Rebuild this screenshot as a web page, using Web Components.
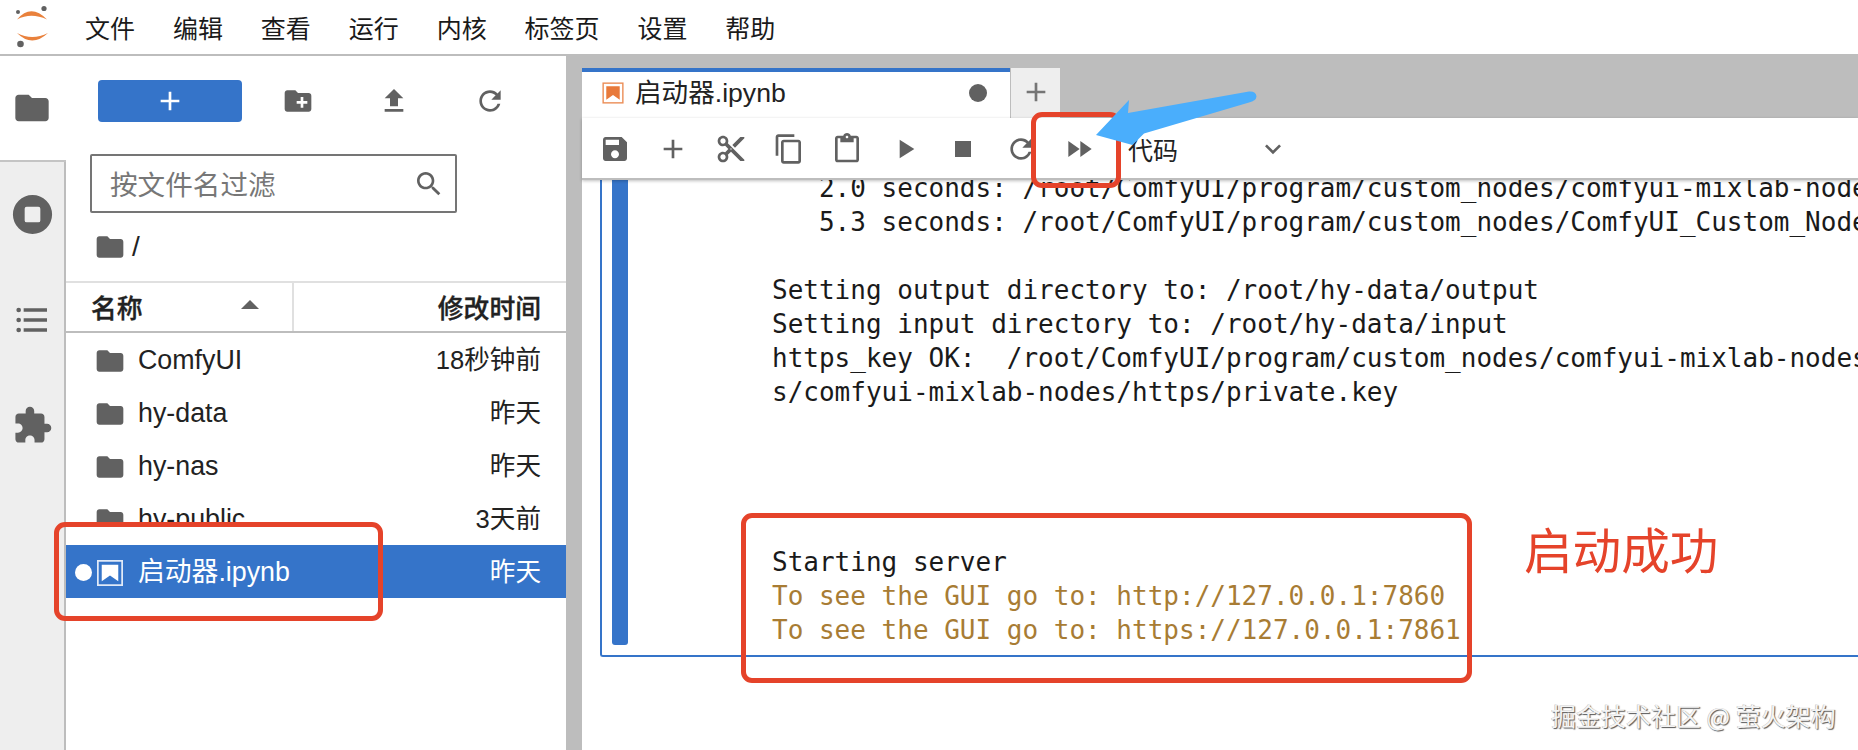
<!DOCTYPE html>
<html lang="zh">
<head>
<meta charset="utf-8">
<title>JupyterLab</title>
<style>
html,body{margin:0;padding:0;background:#fff;overflow:hidden}
body{font-family:"Liberation Sans","Noto Sans CJK SC",sans-serif;color:#1c1c1c}
</style>
</head>
<body>
<jl-app></jl-app>
<script>
const ICONS={
folder:'<path d="M10 4H4c-1.1 0-2 .9-2 2v12c0 1.1.9 2 2 2h16c1.1 0 2-.9 2-2V8c0-1.1-.9-2-2-2h-8l-2-2z"/>',
newfolder:'<path d="M20 6h-8l-2-2H4c-1.11 0-1.99.89-1.99 2L2 18c0 1.11.89 2 2 2h16c1.11 0 2-.89 2-2V8c0-1.11-.89-2-2-2zm-1 8h-3v3h-2v-3h-3v-2h3V9h2v3h3v2z"/>',
upload:'<path d="M5 20h14v-2H5v2zm0-10h4v6h6v-6h4l-7-7-7 7z"/>',
refresh:'<path d="M17.65 6.35C16.2 4.9 14.21 4 12 4c-4.42 0-7.99 3.58-7.99 8s3.57 8 7.99 8c3.73 0 6.84-2.55 7.73-6h-2.08c-.82 2.33-3.04 4-5.65 4-3.31 0-6-2.69-6-6s2.69-6 6-6c1.66 0 3.14.69 4.22 1.78L13 11h7V4l-2.35 2.35z"/>',
search:'<path d="M15.5 14h-.79l-.28-.27C15.41 12.59 16 11.11 16 9.5 16 5.91 13.09 3 9.5 3S3 5.91 3 9.5 5.91 16 9.5 16c1.61 0 3.09-.59 4.23-1.57l.27.28v.79l5 4.99L20.49 19l-4.99-5zm-6 0C7.01 14 5 11.99 5 9.5S7.01 5 9.5 5 14 7.01 14 9.5 11.99 14 9.5 14z"/>',
save:'<path d="M17 3H5c-1.11 0-2 .9-2 2v14c0 1.1.89 2 2 2h14c1.1 0 2-.9 2-2V7l-4-4zm-5 16c-1.66 0-3-1.34-3-3s1.34-3 3-3 3 1.34 3 3-1.34 3-3 3zm3-10H5V5h10v4z"/>',
add:'<path d="M19 13h-6v6h-2v-6H5v-2h6V5h2v6h6v2z"/>',
cut:'<path d="M9.64 7.64c.23-.5.36-1.05.36-1.64 0-2.21-1.79-4-4-4S2 3.79 2 6s1.79 4 4 4c.59 0 1.14-.13 1.64-.36L10 12l-2.36 2.36C7.14 14.13 6.59 14 6 14c-2.21 0-4 1.79-4 4s1.79 4 4 4 4-1.79 4-4c0-.59-.13-1.14-.36-1.64L12 14l7 7h3v-1L9.64 7.64zM6 8c-1.1 0-2-.89-2-2s.9-2 2-2 2 .89 2 2-.9 2-2 2zm0 12c-1.1 0-2-.89-2-2s.9-2 2-2 2 .89 2 2-.9 2-2 2zm6-7.5c-.28 0-.5-.22-.5-.5s.22-.5.5-.5.5.22.5.5-.22.5-.5.5zM19 3l-6 6 2 2 7-7V3z"/>',
copy:'<path d="M16 1H4c-1.1 0-2 .9-2 2v14h2V3h12V1zm3 4H8c-1.1 0-2 .9-2 2v14c0 1.1.9 2 2 2h11c1.1 0 2-.9 2-2V7c0-1.1-.9-2-2-2zm0 16H8V7h11v14z"/>',
paste:'<path d="M19 2h-4.18C14.4.84 13.3 0 12 0c-1.3 0-2.4.84-2.82 2H5c-1.1 0-2 .9-2 2v16c0 1.1.9 2 2 2h14c1.1 0 2-.9 2-2V4c0-1.1-.9-2-2-2zm-7 0c.55 0 1 .45 1 1s-.45 1-1 1-1-.45-1-1 .45-1 1-1zm7 18H5V4h2v3h10V4h2v16z"/>',
play:'<path d="M8 5v14l11-7z"/>',
stop:'<path d="M6 6h12v12H6z"/>',
ff:'<path d="M4 18l8.5-6L4 6v12zm9-12v12l8.5-6L13 6z"/>',
chevron:'<path d="M7.41 8.59L12 13.17l4.59-4.58L18 10l-6 6-6-6z"/>',
stopcircle:'<path fill-rule="evenodd" d="M12 2a10 10 0 1 0 0 20 10 10 0 0 0 0-20zM9 8h6a1 1 0 0 1 1 1v6a1 1 0 0 1-1 1H9a1 1 0 0 1-1-1V9a1 1 0 0 1 1-1z"/>',
list:'<path d="M7 5h14v2H7zM7 11h14v2H7zM7 17h14v2H7z"/><circle cx="4" cy="6" r="1.4"/><circle cx="4" cy="12" r="1.4"/><circle cx="4" cy="18" r="1.4"/>',
puzzle:'<path d="M20.5 11H19V7c0-1.1-.9-2-2-2h-4V3.5C13 2.12 11.88 1 10.5 1S8 2.12 8 3.5V5H4c-1.1 0-1.99.9-1.99 2v3.8H3.5c1.49 0 2.7 1.21 2.7 2.7s-1.21 2.7-2.7 2.7H2V20c0 1.1.9 2 2 2h3.8v-1.5c0-1.49 1.21-2.7 2.7-2.7 1.49 0 2.7 1.21 2.7 2.7V22H17c1.1 0 2-.9 2-2v-4h1.5c1.38 0 2.5-1.12 2.5-2.5S21.88 11 20.5 11z"/>',
notebook:'<rect x="2.9" y="2.9" width="18.2" height="18.2" fill="none" stroke="currentColor" stroke-width="1.3" opacity=".85"/><path d="M5.8 5.8h12.4v12.4l-6.2-4.4-6.2 4.4z"/>'
};
class JlIcon extends HTMLElement{
  connectedCallback(){
    if(this.shadowRoot)return;
    const s=this.getAttribute('size')||32;
    this.attachShadow({mode:'open'}).innerHTML=`<style>:host{display:inline-flex;flex:none;width:${s}px;height:${s}px;color:var(--icon,#616161)}svg{display:block;width:100%;height:100%;fill:currentColor}</style><svg viewBox="0 0 24 24">${ICONS[this.getAttribute('name')]||''}</svg>`;
  }
}
customElements.define('jl-icon',JlIcon);

class JlMenubar extends HTMLElement{
  constructor(){super();this.attachShadow({mode:'open'}).innerHTML=`<style>
:host{display:flex;align-items:center;height:54px;border-bottom:2px solid #bdbdbd;background:#fff;box-sizing:content-box}
svg{display:block;width:66px;height:54px;flex:none}
nav{display:flex;gap:37.9px;margin-left:19px;font:25px/54px "Noto Sans CJK SC",sans-serif;color:#1a1a1a}
</style>
<svg viewBox="0 0 66 54"><path d="M17 19.5Q31 3 47 19.5Q31 12 17 19.5z" fill="#e9813c"/><path d="M17 33Q32 48 48 33Q32 41 17 33z" fill="#e9813c"/><circle cx="44" cy="8.5" r="2.6" fill="#616161"/><circle cx="18" cy="12" r="2" fill="#616161"/><circle cx="20.500" cy="44" r="3.300" fill="#616161"/></svg>
<nav><span>文件</span><span>编辑</span><span>查看</span><span>运行</span><span>内核</span><span>标签页</span><span>设置</span><span>帮助</span></nav>`}
}
customElements.define('jl-menubar',JlMenubar);

class JlSidebar extends HTMLElement{
  constructor(){super();this.attachShadow({mode:'open'}).innerHTML=`<style>
:host{display:flex;flex-direction:column;width:66px;flex:none;box-sizing:border-box;background:#eee;position:relative}
.tab{height:105.6px;display:flex;align-items:center;justify-content:center;box-sizing:border-box;border-right:2px solid #bdbdbd}
.tab.on{background:#fff;border-right:none;border-bottom:2px solid #c4c4c4;padding-right:2px}
.fill{flex:1;border-right:2px solid #bdbdbd}
</style>
<div class="tab on"><jl-icon name="folder" size="40"></jl-icon></div>
<div class="tab"><jl-icon name="stopcircle" size="47"></jl-icon></div>
<div class="tab"><jl-icon name="list" size="40"></jl-icon></div>
<div class="tab"><jl-icon name="puzzle" size="41"></jl-icon></div>
<div class="fill"></div>`}
}
customElements.define('jl-sidebar',JlSidebar);

class JlFileRow extends HTMLElement{
  constructor(){super();
    const sel=this.hasAttribute('selected');
    this.attachShadow({mode:'open'}).innerHTML=`<style>
:host{display:flex;align-items:center;height:53px;padding:2px 25px 0 0;font:26.8px/51px "Liberation Sans","Noto Sans CJK SC",sans-serif;color:#222;box-sizing:border-box;--icon:#616161}
:host([selected]){background:#3574c9;color:#fff;--icon:#fff}
.dot{width:28px;flex:none;display:flex;justify-content:flex-start}
.dot i{display:block;width:17px;height:17px;border-radius:50%;background:#fff;margin-left:9px}
.name{margin-left:12px;flex:1}
.date{font-size:25.6px}
</style>
<span class="dot">${sel?'<i></i>':''}</span>
<jl-icon name="${this.getAttribute('icon')||'folder'}" size="32"></jl-icon>
<span class="name">${this.getAttribute('name')}</span>
<span class="date">${this.getAttribute('date')}</span>`}
}
customElements.define('jl-file-row',JlFileRow);

class JlFilebrowser extends HTMLElement{
  constructor(){super();this.attachShadow({mode:'open'}).innerHTML=`<style>
:host{display:flex;flex-direction:column;width:500px;flex:none;background:#fff;position:relative}
.bar{display:flex;align-items:center;height:42px;margin:24px 0 0 32px}
button{width:144px;height:42px;border:0;border-radius:4px;background:#3574c9;padding:0;display:flex;align-items:center;justify-content:center;--icon:#fff}
.cell{width:96px;display:flex;justify-content:center}
.cell.first{margin-left:8px}
.filter{margin:32px 0 0 24px;width:367px;height:59px;box-sizing:border-box;border:2px solid #757575;border-radius:2px;display:flex;align-items:center;padding:0 10px 0 18px;color:#777;font:27.6px/55px "Noto Sans CJK SC",sans-serif}
.filter span{flex:1}
.crumb{display:flex;align-items:center;height:68px;padding-left:28px;font:28px/68px "Liberation Sans",sans-serif;color:#222}
.crumb span{margin-left:6px}
.head{display:flex;height:52px;box-sizing:border-box;border-top:2px solid #e0e0e0;border-bottom:2px solid #bdbdbd;font:500 25.8px/48px "Noto Sans CJK SC",sans-serif;color:#222;-webkit-text-stroke:.35px #222}
.c1{width:228px;box-sizing:border-box;padding-left:25px;border-right:2px solid #e0e0e0;display:flex;justify-content:space-between;align-items:center;padding-right:33px}
.c1 svg{display:block;width:18px;height:9px;fill:#616161;margin-top:-6px}
.c2{flex:1;text-align:right;padding-right:25px}
.patch{position:absolute;left:0;width:312px;top:471px;height:18px;background:#fff}
</style>
<div class="bar"><button aria-label="新建"><jl-icon name="add" size="32"></jl-icon></button>
<div class="cell first"><jl-icon name="newfolder"></jl-icon></div><div class="cell"><jl-icon name="upload"></jl-icon></div><div class="cell"><jl-icon name="refresh"></jl-icon></div></div>
<div class="filter"><span>按文件名过滤</span><jl-icon name="search" size="32" style="--icon:#616161"></jl-icon></div>
<div class="crumb"><jl-icon name="folder" size="32"></jl-icon><span>/</span></div>
<div class="head"><div class="c1"><span>名称</span><svg viewBox="0 0 18 9"><path d="M9 0l9 9H0z"/></svg></div><div class="c2">修改时间</div></div>
<jl-file-row name="ComfyUI" date="18秒钟前"></jl-file-row>
<jl-file-row name="hy-data" date="昨天"></jl-file-row>
<jl-file-row name="hy-nas" date="昨天"></jl-file-row>
<jl-file-row name="hy-public" date="3天前"></jl-file-row>
<jl-file-row name="启动器.ipynb" date="昨天" icon="notebook" selected></jl-file-row>
<div class="patch"></div>`}
}
customElements.define('jl-filebrowser',JlFilebrowser);

class JlNotebook extends HTMLElement{
  constructor(){super();this.attachShadow({mode:'open'}).innerHTML=`<style>
:host{display:flex;flex-direction:column;flex:1;min-width:0;background:#bdbdbd;padding:12px 0 0 16px;box-sizing:border-box;height:694px;overflow:hidden}
.tabs{display:flex;height:50px;flex:none}
.tab{width:428px;background:#fff;border-top:4px solid #3574c9;box-sizing:border-box;display:flex;align-items:center;padding:0 23px 4px 18px;font:26.6px/46px "Liberation Sans","Noto Sans CJK SC",sans-serif;color:#222}
.tab b{font-weight:400;flex:1;margin-left:9px}
.tab i{display:block;width:18px;height:18px;border-radius:50%;background:#616161}
.plus{width:49px;margin-left:1px;background:#eee;display:flex;align-items:center;justify-content:center;padding-bottom:2px;box-sizing:border-box;--icon:#757575}
.tb{display:flex;align-items:center;height:62px;flex:none;box-sizing:border-box;background:#fff;padding:2px 0 0 4px;border-bottom:2px solid #bdbdbd;box-shadow:0 1px 3px rgba(0,0,0,.25);position:relative;z-index:1}
.tb .c{width:58px;display:flex;justify-content:center}
.tb .kind{margin-left:20px;width:129px;font:25px/58px "Noto Sans CJK SC",sans-serif;color:#222}
.body{flex:1;min-height:0;background:#fff;overflow:hidden;padding-left:18px}
.cell{margin-top:-40px;height:517px;box-sizing:border-box;border-left:2px solid #3574c9;border-bottom:2px solid #3574c9;border-bottom-left-radius:3px;padding-left:10px;display:flex}
.col{width:16px;flex:none;height:505px;background:#3574c9;border-radius:0 0 3px 3px}
.out{margin-left:144px;flex:none}
pre{margin:0;font:26px/34px "DejaVu Sans Mono",monospace;color:#1a1a1a;white-space:pre}
pre.top{margin-top:31px;width:1086px;overflow:hidden}
pre.bot{margin-top:136px;width:max-content}
.y{color:#a87c34}
</style>
<div class="tabs"><div class="tab"><jl-icon name="notebook" size="26" style="--icon:#e8793a"></jl-icon><b>启动器.ipynb</b><i></i></div><div class="plus"><jl-icon name="add" size="32"></jl-icon></div></div>
<div class="tb">
<div class="c"><jl-icon name="save"></jl-icon></div><div class="c"><jl-icon name="add"></jl-icon></div><div class="c"><jl-icon name="cut"></jl-icon></div><div class="c"><jl-icon name="copy"></jl-icon></div><div class="c"><jl-icon name="paste"></jl-icon></div><div class="c"><jl-icon name="play"></jl-icon></div><div class="c"><jl-icon name="stop"></jl-icon></div><div class="c"><jl-icon name="refresh"></jl-icon></div><div class="c"><jl-icon name="ff"></jl-icon></div>
<div class="kind">代码</div><jl-icon name="chevron"></jl-icon>
</div>
<div class="body"><div class="cell"><div class="col"></div><div class="out"><pre class="top">   2.0 seconds: /root/ComfyUI/program/custom_nodes/comfyui-mixlab-nodes
   5.3 seconds: /root/ComfyUI/program/custom_nodes/ComfyUI_Custom_Nodes

Setting output directory to: /root/hy-data/output
Setting input directory to: /root/hy-data/input
https_key OK:  /root/ComfyUI/program/custom_nodes/comfyui-mixlab-nodes
s/comfyui-mixlab-nodes/https/private.key</pre><pre class="bot">Starting server
<span class="y">To see the GUI go to: http://127.0.0.1:7860
To see the GUI go to: https://127.0.0.1:7861</span></pre></div></div></div>`}
}
customElements.define('jl-notebook',JlNotebook);

class JlRedBox extends HTMLElement{
  constructor(){super();this.attachShadow({mode:'open'}).innerHTML=`<style>:host{display:block;position:absolute;z-index:5;box-sizing:border-box;border:5px solid #e5432a;border-radius:11px;pointer-events:none}</style>`}
}
customElements.define('jl-red-box',JlRedBox);

class JlApp extends HTMLElement{
  constructor(){super();this.attachShadow({mode:'open'}).innerHTML=`<style>
:host{display:block;position:relative;width:1858px;height:750px;overflow:hidden}
.row{display:flex;height:694px}
.arrow{position:absolute;z-index:6;left:0;top:0;width:1858px;height:750px;pointer-events:none}
.note{position:absolute;left:1524px;top:519px;font:48.6px/58px "Noto Sans CJK SC",sans-serif;color:#e5432a}
.wm{position:absolute;left:1551px;top:698px;font:25px/34px "Noto Sans CJK SC",sans-serif;color:#f4f4f4;text-shadow:1px 1px 1px #555,-.5px -.5px 0 #bbb;white-space:pre}
</style>
<jl-menubar></jl-menubar>
<div class="row"><jl-sidebar></jl-sidebar><jl-filebrowser></jl-filebrowser><jl-notebook></jl-notebook></div>
<jl-red-box style="left:54px;top:522px;width:329px;height:99px"></jl-red-box>
<jl-red-box style="left:1031px;top:112px;width:90px;height:76px"></jl-red-box>
<jl-red-box style="left:741px;top:513px;width:731px;height:170px"></jl-red-box>
<svg class="arrow" viewBox="0 0 1858 750"><path d="M1096 135L1129 100L1128 113L1249 91.500Q1256 91 1256.500 96.500Q1256 101 1249 102.500L1144 133.500L1132.500 145z" fill="#4aaefc"/></svg>
<div class="note">启动成功</div>
<div class="wm">掘金技术社区 @ 萤火架构</div>`}
}
customElements.define('jl-app',JlApp);
</script>
</body>
</html>
